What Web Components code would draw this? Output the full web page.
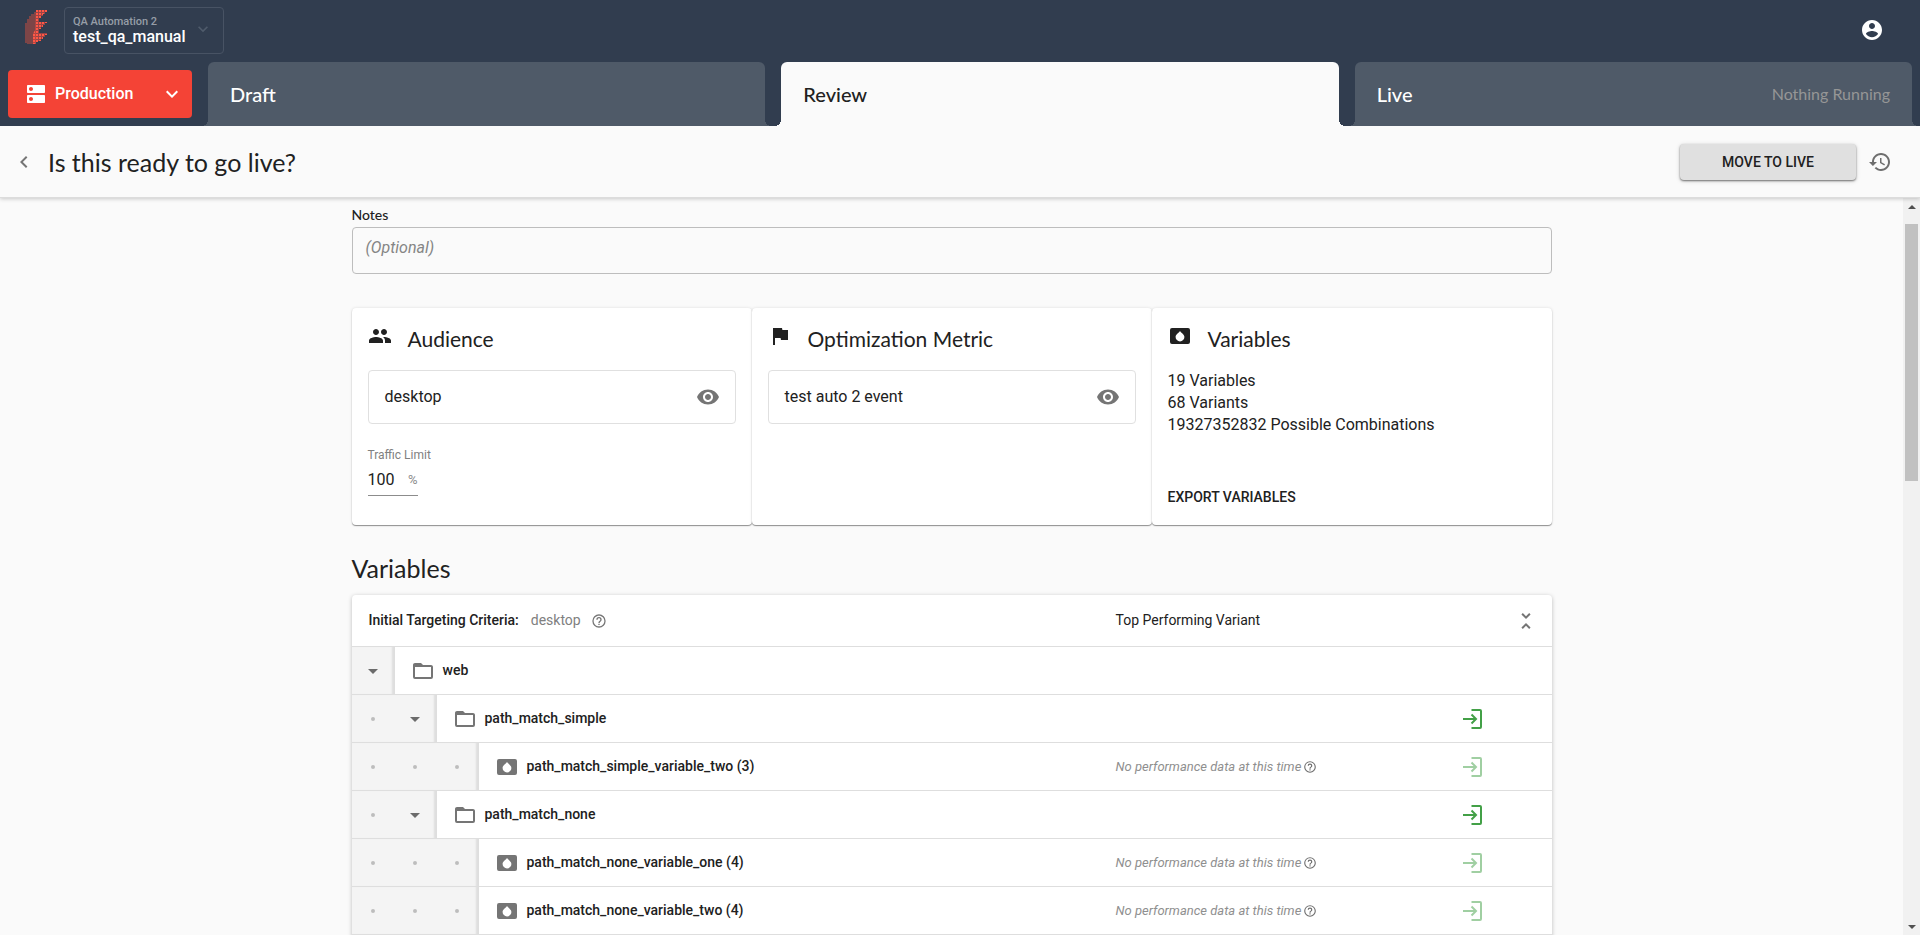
<!DOCTYPE html>
<html lang="en">
<head>
<meta charset="utf-8">
<title>Review</title>
<style>
  html, body { margin: 0; height: 100%; }
  body {
    font-family: Roboto, "Liberation Sans", sans-serif;
    font-size: 14px;
    color: #212121;
    background: #fafafa;
    --display: Lato, "Liberation Sans", sans-serif;
    --navy: #313d4f;
    --line: #e0e0e0;
    --muted: #757575;
  }
</style>
</head>
<body>
<review-app></review-app>

<script>
const ICONS = {
  logo: `<defs>
    <pattern id="a" width="2" height="2" patternUnits="userSpaceOnUse"><rect width="2" height="2" fill="#a8443f" fill-opacity=".25"/><rect x=".4" y=".4" width="1.200" height="1.200" fill="#f0523f" fill-opacity=".8"/></pattern>
    <pattern id="b" width="3" height="3" patternUnits="userSpaceOnUse"><rect width="3" height="3" fill="#e04a3f" fill-opacity=".6"/><rect width="2" height="2" fill="#ff5846"/></pattern></defs>
    <path fill="url(#a)" d="M12 2v32H3v-1H1V13h2V9h2V6h2V4h3V2z"/>
    <path fill="url(#b)" d="M12 0h11v2h-2v2h-2v2h-2v2h-2v4h8v1h-2v2h-2v2h-2v2h-2v4h8v2h-2v2h-2v2h-2v2h-3v1h-2v2H9V24l2-4z"/>`,
  dns: '<path d="M20 13H4c-.55 0-1 .45-1 1v6c0 .55.45 1 1 1h16c.55 0 1-.45 1-1v-6c0-.55-.45-1-1-1zM7 19c-1.1 0-2-.9-2-2s.9-2 2-2 2 .9 2 2-.9 2-2 2zM20 3H4c-.55 0-1 .45-1 1v6c0 .55.45 1 1 1h16c.55 0 1-.45 1-1V4c0-.55-.45-1-1-1zM7 9c-1.1 0-2-.9-2-2s.9-2 2-2 2 .9 2 2-.9 2-2 2z"/>',
  account: '<path d="M12 2C6.48 2 2 6.48 2 12s4.48 10 10 10 10-4.48 10-10S17.52 2 12 2zm0 3c1.66 0 3 1.34 3 3s-1.34 3-3 3-3-1.34-3-3 1.34-3 3-3zm0 14.2c-2.5 0-4.71-1.28-6-3.22.03-1.99 4-3.08 6-3.08 1.99 0 5.97 1.09 6 3.08-1.29 1.94-3.5 3.22-6 3.22z"/>',
  history: '<path d="M13 3c-4.97 0-9 4.03-9 9H1l3.89 3.89.07.14L9 12H6c0-3.87 3.13-7 7-7s7 3.13 7 7-3.13 7-7 7c-1.93 0-3.68-.79-4.94-2.06l-1.42 1.42C8.27 19.99 10.51 21 13 21c4.97 0 9-4.03 9-9s-4.03-9-9-9zm-1 5v5l4.28 2.54.72-1.21-3.5-2.08V8H12z"/>',
  group: '<path d="M16 11c1.66 0 2.99-1.34 2.99-3S17.66 5 16 5c-1.66 0-3 1.34-3 3s1.34 3 3 3zm-8 0c1.66 0 2.99-1.34 2.99-3S9.66 5 8 5C6.34 5 5 6.34 5 8s1.34 3 3 3zm0 2c-2.33 0-7 1.17-7 3.5V19h14v-2.5c0-2.33-4.67-3.5-7-3.5zm8 0c-.29 0-.62.02-.97.05 1.16.84 1.97 1.97 1.97 3.45V19h6v-2.5c0-2.33-4.67-3.5-7-3.5z"/>',
  flag: '<path d="M14.4 6L14 4H5v17h2v-7h5.6l.4 2h7V6z"/>',
  variable: '<path fill-rule="evenodd" d="M4 4h16a2 2 0 0 1 2 2v12a2 2 0 0 1-2 2H4a2 2 0 0 1-2-2V6a2 2 0 0 1 2-2zm8 3c-1.2 2-4.4 3.400-4.400 6a4.400 4.400 0 0 0 8.800 0c0-2.600-3.200-4-4.400-6z"/>',
  eye: '<path d="M12 4.5C7 4.5 2.73 7.61 1 12c1.73 4.39 6 7.5 11 7.5s9.27-3.11 11-7.5c-1.73-4.39-6-7.5-11-7.5zM12 17c-2.76 0-5-2.24-5-5s2.240-5 5-5 5 2.240 5 5-2.240 5-5 5zm0-8c-1.66 0-3 1.34-3 3s1.34 3 3 3 3-1.34 3-3-1.34-3-3-3z"/>',
  folder: '<path d="M20,18H4V8H20M20,6H12L10,4H4C2.89,4 2,4.89 2,6V18A2,2 0 0,0 4,20H20A2,2 0 0,0 22,18V8C22,6.89 21.1,6 20,6Z"/>',
  help: '<path d="M11,18H13V16H11V18M12,2A10,10 0 0,0 2,12A10,10 0 0,0 12,22A10,10 0 0,0 22,12A10,10 0 0,0 12,2M12,20C7.59,20 4,16.41 4,12C4,7.59 7.59,4 12,4C16.41,4 20,7.59 20,12C20,16.41 16.41,20 12,20M12,6A4,4 0 0,0 8,10H10A2,2 0 0,1 12,8A2,2 0 0,1 14,10C14,12 11,11.75 11,15H13C13,12.75 16,12.5 16,10A4,4 0 0,0 12,6Z"/>',
  enter: '<path fill="none" stroke="currentColor" stroke-width="2" d="M11.500 3H20a1 1 0 0 1 1 1V20a1 1 0 0 1-1 1H11.500M3 12H16M11.500 7.500L16 12L11.500 16.500"/>',
  fold: '<path d="M7.410 18.590L8.830 20 12 16.830 15.170 20l1.410-1.410L12 14l-4.590 4.590zm9.180-13.180L15.170 4 12 7.170 8.830 4 7.410 5.410 12 10l4.590-4.590z"/>',
  caret: '<path d="M7 10l5 5 5-5z"/>',
  down: '<path d="M7.410 8.590L12 13.170l4.590-4.580L18 10l-6 6-6-6z"/>',
  left: '<path d="M15.410 7.410L14 6l-6 6 6 6 1.410-1.410L10.830 12z"/>'
};

function define(name, html, setup) {
  const tpl = document.createElement('template');
  tpl.innerHTML = html;
  customElements.define(name, class extends HTMLElement {
    constructor() {
      super();
      this.attachShadow({ mode: 'open' }).append(tpl.content.cloneNode(true));
    }
    connectedCallback() { if (setup) setup(this, this.shadowRoot); }
  });
}

define('ui-icon', `<style>
  :host { display: block; flex: none; width: var(--size, 24px); height: var(--size, 24px); }
  svg { display: block; width: 100%; height: 100%; fill: currentColor; }
</style><svg aria-hidden="true"></svg>`, (el, root) => {
  const svg = root.querySelector('svg');
  svg.setAttribute('viewBox', el.getAttribute('box') || '0 0 24 24');
  svg.innerHTML = ICONS[el.getAttribute('name')];
});

define('icon-button', `<style>
  :host { display: block; flex: none; }
  button { display: block; padding: 0; border: 0; background: none; color: inherit; cursor: pointer; }
</style><button type="button"><slot></slot></button>`, (el, root) => {
  root.querySelector('button').setAttribute('aria-label', el.getAttribute('label') || '');
});

define('top-bar', `<style>
  :host { display: flex; align-items: center; height: 62px; padding: 0 36px 2px 24px; box-sizing: border-box; background: var(--navy); color: #fff; }
  .logo { width: 24px; height: 36px; margin: 0 16px 4px 0; }
  .project { display: flex; align-items: center; gap: 4px; box-sizing: border-box; width: 160px; height: 47px; padding: 0 8px; border: 1px solid #485364; border-radius: 4px; background: none; color: #fff; font: 500 16px/18px Roboto, sans-serif; text-align: left; }
  small { display: block; font: 500 11px/13px Roboto, sans-serif; color: #969da7; }
  .project ui-icon { --size: 20px; color: #4f5b6b; margin-bottom: 2px; }
  .names { width: 116px; }
  icon-button { margin-left: auto; }
</style>
<ui-icon class="logo" name="logo" box="0 0 24 36"></ui-icon>
<button type="button" class="project"><span class="names"><small>QA Automation 2</small>test_qa_manual</span><ui-icon name="down"></ui-icon></button>
<icon-button label="Account"><ui-icon name="account"></ui-icon></icon-button>`);

define('env-button', `<style>
  :host { display: block; width: 184px; flex: none; }
  button { display: flex; align-items: center; width: 100%; height: 48px; padding: 0 8px 0 16px; border: 0; border-radius: 4px; background: #f44336; color: #fff; font: 500 16px/20px Roboto, sans-serif; }
  span { flex: 1; text-align: left; padding-left: 7px; }
</style><button type="button"><ui-icon name="dns"></ui-icon><span><slot></slot></span><ui-icon name="down"></ui-icon></button>`);

define('stage-tab', `<style>
  :host { display: block; flex: 1 1 0; min-width: 0; --fill: #4f5a68; color: #fff; }
  :host([selected]) { --fill: #fafafa; color: #212121; }
  a { position: relative; display: flex; align-items: center; height: 64px; padding: 0 22px; box-sizing: border-box; border-radius: 6px 6px 0 0; background: var(--fill); color: inherit; text-decoration: none; font: 500 20px/24px var(--display); }
  a::before, a::after { content: ""; position: absolute; bottom: 0; width: 6px; height: 6px; }
  a::before { right: 100%; background: radial-gradient(circle at 0 0, transparent 6px, var(--fill) 6px); }
  a::after { left: 100%; background: radial-gradient(circle at 100% 0, transparent 6px, var(--fill) 6px); }
  ::slotted([slot=status]) { margin-left: auto; font: 400 16px/20px var(--display); color: #969696; }
</style><a href="#"><slot></slot><slot name="status"></slot></a>`);

define('stage-bar', `<style>
  :host { display: flex; align-items: center; gap: 16px; padding: 0 8px; background: var(--navy); overflow: hidden; }
</style>
<env-button>Production</env-button>
<stage-tab>Draft</stage-tab>
<stage-tab selected>Review</stage-tab>
<stage-tab>Live<span slot="status">Nothing Running</span></stage-tab>`);

define('page-header', `<style>
  :host { display: flex; align-items: center; position: relative; box-sizing: border-box; height: 72px; padding: 0 28px 0 12px; background: #fafafa; border-bottom: 1px solid #dcdcdc; box-shadow: 0 1px 4px rgba(0,0,0,.2); clip-path: inset(0 0 -8px 0); }
  h1 { flex: 1; margin: 0 0 0 12px; font: 400 25px/32px var(--display); }
  .back { color: var(--muted); }
  .move { width: 176px; height: 36px; margin-right: 12px; padding: 0; border: 0; border-radius: 4px; background: #e0e0e0; color: #212121; font: 500 14px/20px Roboto, sans-serif; box-shadow: 0 1px 2px rgba(0,0,0,.5), 0 1px 5px rgba(0,0,0,.15); }
  .history { color: #6e6e6e; }
</style>
<icon-button class="back" label="Back"><ui-icon name="left"></ui-icon></icon-button>
<h1>Is this ready to go live?</h1>
<button type="button" class="move">MOVE TO LIVE</button>
<icon-button class="history" label="History"><ui-icon name="history"></ui-icon></icon-button>`);

define('notes-field', `<style>
  :host { display: block; }
  label { display: block; padding: 8px 0 3px; font: 500 14px/18px var(--display); }
  textarea { display: block; box-sizing: border-box; width: 100%; height: 47px; padding: 10px 13px; border: 1px solid #bdbdbd; border-radius: 4px; background: none; resize: none; font: 400 16px/20px Roboto, sans-serif; color: inherit; }
  textarea::placeholder { font-style: italic; color: #858585; opacity: 1; }
</style><label for="n">Notes</label><textarea id="n" placeholder="(Optional)"></textarea>`);

define('info-card', `<style>
  :host { display: flex; flex-direction: column; flex: 1; box-sizing: border-box; height: 217px; padding: 16px; border-radius: 4px; background: #fff; box-shadow: 0 1px 1px rgba(0,0,0,.4), 0 0 3px rgba(0,0,0,.12); }
  header { display: flex; align-items: flex-start; gap: 16px; height: 46px; }
  h2 { margin: 0; padding-top: 1px; font: 400 21px/28px var(--display); }
</style><header><ui-icon></ui-icon><h2></h2></header><slot></slot>`, (el, root) => {
  const old = root.querySelector('ui-icon');
  const icon = document.createElement('ui-icon');
  icon.setAttribute('name', el.getAttribute('icon'));
  old.replaceWith(icon);
  root.querySelector('h2').textContent = el.getAttribute('heading');
});

define('preview-box', `<style>
  :host { display: flex; align-items: center; justify-content: space-between; box-sizing: border-box; height: 54px; padding: 0 15px 0 16px; border: 1px solid var(--line); border-radius: 4px; font-size: 16px; line-height: 20px; }
  icon-button { color: var(--muted); }
</style><slot></slot><icon-button label="Preview"><ui-icon name="eye"></ui-icon></icon-button>`);

define('traffic-limit', `<style>
  :host { display: block; margin-top: 22px; }
  label { display: block; font-size: 12px; line-height: 18px; color: #808080; }
  div { display: flex; align-items: center; width: 50px; height: 32px; border-bottom: 1px solid #8c8c8c; box-sizing: border-box; color: #8c8c8c; font-size: 13px; }
  input { flex: 1; min-width: 0; padding: 0; border: 0; outline: 0; background: none; color: #212121; font: 400 16px/20px Roboto, sans-serif; }
</style><label for="t">Traffic Limit</label><div><input id="t" type="text" value="100"><span>%</span></div>`);

define('variable-stats', `<style>
  :host { display: flex; flex-direction: column; flex: 1; font-size: 16px; line-height: 22px; }
  p { margin: 0; }
  button { margin: auto auto 0 0; padding: 0; border: 0; background: none; color: inherit; font: 500 14px/24px Roboto, sans-serif; }
</style><p>19 Variables</p><p>68 Variants</p><p>19327352832 Possible Combinations</p><button type="button">EXPORT VARIABLES</button>`);

define('tree-gutter', `<style>
  :host { display: flex; flex: none; box-sizing: border-box; height: 47px; background: #f4f4f4; padding-right: 1px; box-shadow: inset -4px 0 2px -1px #dedede; }
  span { display: grid; place-items: center; width: 42px; }
  i { width: 4px; height: 4px; border-radius: 50%; background: #bdbdbd; }
  icon-button { color: #6b6b6b; }
</style>`, (el, root) => {
  const depth = +el.getAttribute('depth'), open = el.hasAttribute('folder');
  for (let i = 1; i <= depth; i++) {
    const s = document.createElement('span');
    s.innerHTML = open && i === depth
      ? '<icon-button label="Collapse"><ui-icon name="caret"></ui-icon></icon-button>' : '<i></i>';
    root.append(s);
  }
});

define('variable-table', `<style>
  :host { display: block; border-radius: 4px 4px 0 0; background: #fff; box-shadow: 0 1px 4px rgba(0,0,0,.25); }
  table { width: 100%; border-collapse: separate; border-spacing: 0; table-layout: fixed; }
  th, td { padding: 0; height: 47px; border-bottom: 1px solid #dedede; text-align: left; font-weight: 400; }
  th { height: 51px; }
  .perf { width: 340px; } .act { width: 32px; } .end { width: 64px; }
  .row { display: flex; align-items: center; }
  .title { font-weight: 500; padding: 0 12px 2px 17px; }
  .crit { color: #808080; padding: 0 10px 2px 0; }
  .crit + ui-icon { --size: 16px; color: var(--muted); }
  .row ui-icon { color: var(--muted); }
  .row .kind { margin-left: 16px; }
  .name { padding: 0 0 2px 8px; font-weight: 500; }
  em { display: flex; align-items: center; gap: 2px; font-size: 13px; color: #8f8f8f; }
  em ui-icon { --size: 14px; color: #6e6e6e; }
  .go { color: #43a047; } .go.off { opacity: .5; }
  .act icon-button { margin-left: 4px; }
  th.end icon-button { margin-left: 26px; color: var(--muted); }
  th.perf { padding-bottom: 2px; height: 49px; }
</style>
<table><thead><tr>
  <th><div class="row"><span class="title">Initial Targeting Criteria:</span><span class="crit">desktop</span><ui-icon name="help"></ui-icon></div></th>
  <th class="perf">Top Performing Variant</th><th class="act"></th>
  <th class="end"><icon-button label="Collapse all"><ui-icon name="fold"></ui-icon></icon-button></th>
</tr></thead><tbody></tbody></table>`, (el, root) => {
  const rows = [
    [1, 'folder', 'web'],
    [2, 'folder', 'path_match_simple', 'go'],
    [3, 'variable', 'path_match_simple_variable_two (3)', 'go off'],
    [2, 'folder', 'path_match_none', 'go'],
    [3, 'variable', 'path_match_none_variable_one (4)', 'go off'],
    [3, 'variable', 'path_match_none_variable_two (4)', 'go off'],
    [3]
  ];
  root.querySelector('tbody').innerHTML = rows.map(([d, kind, name, go]) => `<tr>
    <td><div class="row"><tree-gutter depth="${d}"${kind === 'folder' ? ' folder' : ''}></tree-gutter>${name ? `<ui-icon class="kind" name="${kind}"></ui-icon><span class="name">${name}</span>` : ''}</div></td>
    <td>${kind === 'variable' ? '<em>No performance data at this time<ui-icon name="help"></ui-icon></em>' : ''}</td>
    <td class="act">${go ? `<icon-button label="Export" class="${go}"><ui-icon name="enter"></ui-icon></icon-button>` : ''}</td>
    <td></td></tr>`).join('');
});

define('scroll-rail', `<style>
  :host { display: flex; flex-direction: column; flex: none; width: 17px; background: #f1f1f1; color: #505050; }
  b { height: 17px; display: grid; place-items: center; }
  b::before { content: ""; border: 4px solid transparent; border-top-width: 0; border-bottom-color: currentColor; }
  b.down::before { border-width: 4px 4px 0; border-top-color: currentColor; }
  div { flex: 1; padding: 9px 2px 0; }
  i { display: block; height: 37%; background: #c1c1c1; }
</style><b></b><div><i></i></div><b class="down"></b>`);

define('review-app', `<style>
  :host { display: flex; flex-direction: column; height: 100vh; overflow: hidden; }
  top-bar, stage-bar, page-header, scroll-rail { flex: none; }
  .body { display: flex; flex: 1; min-height: 0; }
  main { flex: 1; overflow-y: auto; scrollbar-width: none; }
  .page { max-width: 1200px; margin: 0 auto; }
  .cards { display: flex; margin-top: 34px; }
  h2 { margin: 27px 0 11px; font: 400 25px/32px var(--display); }
</style>
<top-bar></top-bar>
<stage-bar></stage-bar>
<page-header></page-header>
<div class="body">
  <main><div class="page">
    <notes-field></notes-field>
    <div class="cards">
      <info-card icon="group" heading="Audience"><preview-box>desktop</preview-box><traffic-limit></traffic-limit></info-card>
      <info-card icon="flag" heading="Optimization Metric"><preview-box>test auto 2 event</preview-box></info-card>
      <info-card icon="variable" heading="Variables"><variable-stats></variable-stats></info-card>
    </div>
    <h2>Variables</h2>
    <variable-table></variable-table>
  </div></main>
  <scroll-rail></scroll-rail>
</div>`);
</script>
</body>
</html>
